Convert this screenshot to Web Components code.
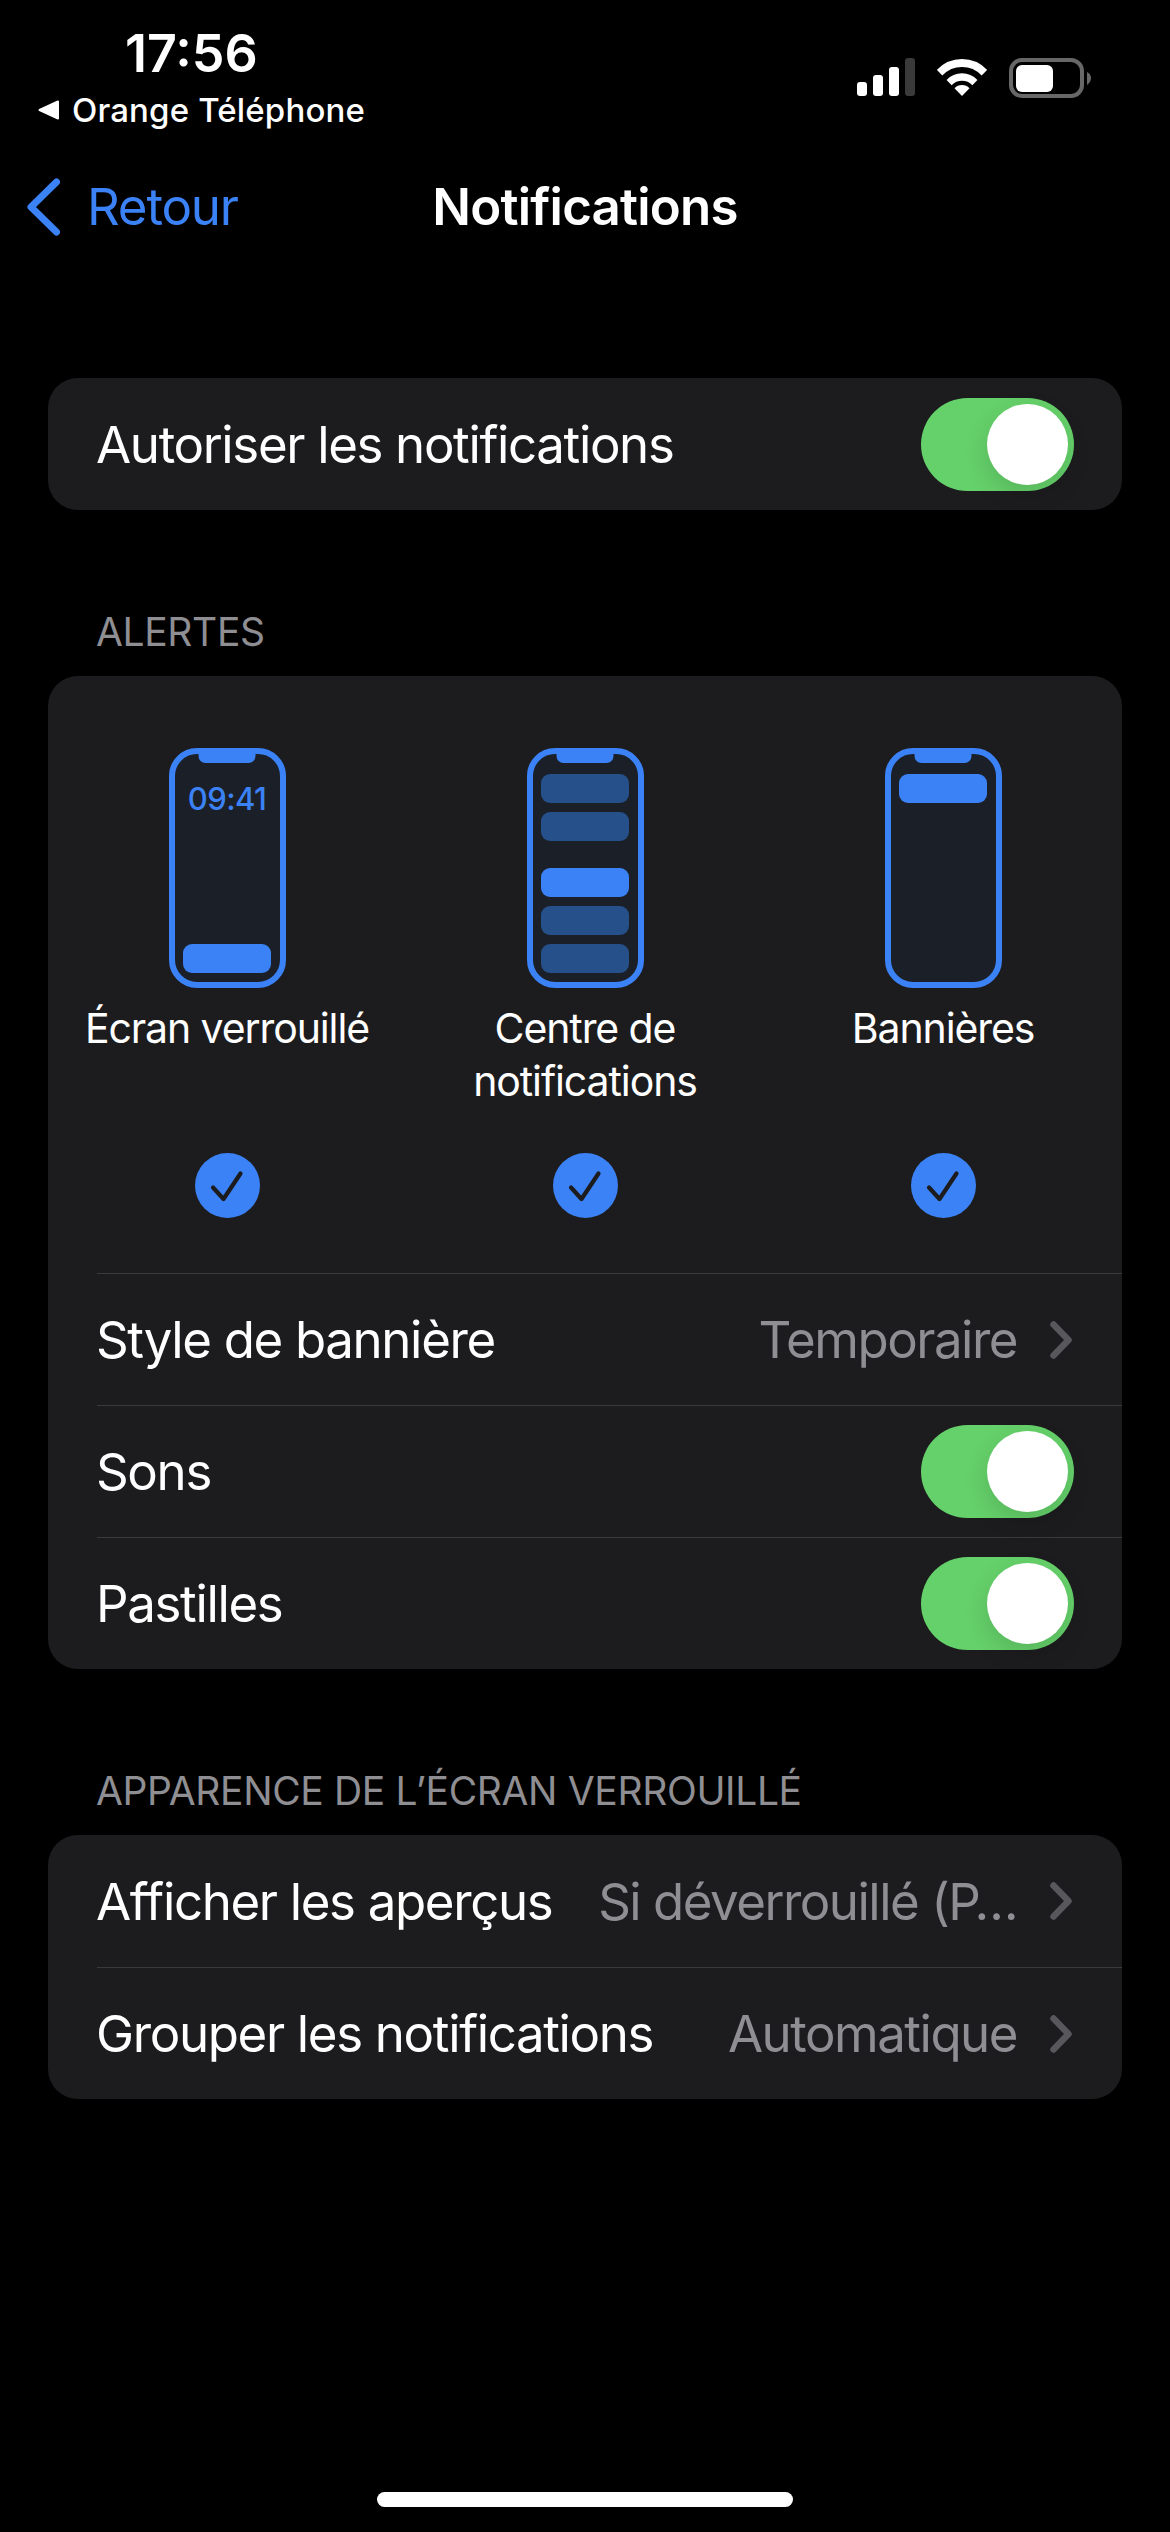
<!DOCTYPE html>
<html lang="fr">
<head>
<meta charset="utf-8">
<title>Notifications</title>
<style>
  html, body { margin: 0; background: #000; }
  body {
    width: 1170px;
    height: 2532px;
    overflow: hidden;
    color: #fff;
    font-family: Inter, "Liberation Sans", sans-serif;
    display: flex;
    flex-direction: column;
  }
</style>
</head>
<body>
  <status-bar time="17:56" carrier="Orange Téléphone"></status-bar>
  <nav-bar back="Retour" heading="Notifications"></nav-bar>

  <settings-group style="margin-top: 107px">
    <settings-row label="Autoriser les notifications"><toggle-switch></toggle-switch></settings-row>
  </settings-group>

  <settings-group heading="ALERTES" style="margin-top: 100px">
    <alert-styles>
      <alert-option label="Écran verrouillé">
        <phone-mock>
          <lock-time>09:41</lock-time>
          <notif-pill style="margin-top: auto"></notif-pill>
        </phone-mock>
      </alert-option>
      <alert-option label="Centre de notifications">
        <phone-mock>
          <notif-pill dim></notif-pill>
          <notif-pill dim style="margin-top: 9px"></notif-pill>
          <notif-pill style="margin-top: 27px"></notif-pill>
          <notif-pill dim style="margin-top: 9px"></notif-pill>
          <notif-pill dim style="margin-top: 9px"></notif-pill>
        </phone-mock>
      </alert-option>
      <alert-option label="Bannières">
        <phone-mock>
          <notif-pill></notif-pill>
        </phone-mock>
      </alert-option>
    </alert-styles>
    <settings-row separator label="Style de bannière" value="Temporaire" chevron></settings-row>
    <settings-row separator label="Sons"><toggle-switch></toggle-switch></settings-row>
    <settings-row separator label="Pastilles"><toggle-switch></toggle-switch></settings-row>
  </settings-group>

  <settings-group heading="APPARENCE DE L’ÉCRAN VERROUILLÉ" style="margin-top: 100px">
    <settings-row label="Afficher les aperçus" value="Si déverrouillé (P…" chevron></settings-row>
    <settings-row separator label="Grouper les notifications" value="Automatique" chevron></settings-row>
  </settings-group>

  <home-bar></home-bar>

<script>
// Small helper: every element below just sets its shadow markup once
class ShadowEl extends HTMLElement {
  constructor() {
    super();
    this.attachShadow({ mode: 'open' });
  }
  connectedCallback() {
    this.shadowRoot.innerHTML = this.render();
  }
  attr(name) {
    return this.getAttribute(name) || '';
  }
}

class StatusBar extends ShadowEl {
  render() {
    return `
    <style>
      :host { display: flex; height: 132px; flex: none; justify-content: space-between; }
      .left { width: 400px; display: flex; flex-direction: column; }
      .time { font-size: 52px; font-weight: 600; line-height: 50px; margin-top: 29px; padding-left: 125px; }
      .carrier { display: flex; align-items: center; gap: 13px; margin-top: 9px; padding-left: 38px; font-size: 33px; font-weight: 500; line-height: 44px; letter-spacing: 0.15px; white-space: nowrap; }
      .right { display: flex; align-items: flex-start; padding: 58px 79px 0 0; }
      .signal, .wifi { margin-right: 22px; }
      svg { display: block; }
    </style>
    <div class="left">
      <div class="time">${this.attr('time')}</div>
      <div class="carrier">
        <svg width="21" height="20" viewBox="0 0 21 20"><path d="M20 1.5 V18.5 L1.5 10 Z" fill="#fff" stroke="#fff" stroke-width="2" stroke-linejoin="round"/></svg>
        <span>${this.attr('carrier')}</span>
      </div>
    </div>
    <div class="right">
      <svg class="signal" width="58" height="38" viewBox="0 0 58 38">
        <rect x="0" y="24" width="10" height="14" rx="3" fill="#fff"/>
        <rect x="16" y="17" width="10" height="21" rx="3" fill="#fff"/>
        <rect x="32" y="9" width="10" height="29" rx="3" fill="#fff"/>
        <rect x="48" y="0" width="10" height="38" rx="3" fill="#3a3a3a"/>
      </svg>
      <svg class="wifi" width="50" height="38" viewBox="-26 -38 52 38" preserveAspectRatio="none" fill="none" stroke="#fff">
        <path d="M-23.3 -23.3 A33 33 0 0 1 23.3 -23.3" stroke-width="8"/>
        <path d="M-13.4 -13.4 A19 19 0 0 1 13.4 -13.4" stroke-width="7.5"/>
        <path d="M0 0 L-7.8 -7.8 A11 11 0 0 1 7.8 -7.8 Z" fill="#fff" stroke="none"/>
      </svg>
      <svg width="82" height="40" viewBox="0 0 82 40">
        <rect x="2" y="2" width="71" height="36" rx="11" fill="none" stroke="#676767" stroke-width="4"/>
        <rect x="7" y="7" width="37" height="27" rx="6" fill="#fff"/>
        <path d="M78 14 Q82 16 82 20 Q82 24 78 27 Z" fill="#676767"/>
      </svg>
    </div>`;
  }
}

class NavBar extends ShadowEl {
  render() {
    return `
    <style>
      :host { display: grid; grid-template-columns: 1fr auto 1fr; align-items: center; height: 139px; padding-top: 10px; box-sizing: border-box; flex: none; font-size: 51px; letter-spacing: -1.2px; }
      .back { display: flex; align-items: center; gap: 27px; padding-left: 27px; color: #3b82f6; }
      h1 { margin: 0; font-size: 51px; font-weight: 600; color: #fff; letter-spacing: -0.8px; }
      svg { display: block; }
    </style>
    <div class="back">
      <svg width="33" height="58" viewBox="0 0 33 58"><path d="M29.5 4 L4 29 L29.5 54" fill="none" stroke="#3b82f6" stroke-width="7" stroke-linecap="round" stroke-linejoin="round"/></svg>
      <span>${this.attr('back')}</span>
    </div>
    <h1>${this.attr('heading')}</h1>
    <div></div>`;
  }
}

class SettingsGroup extends ShadowEl {
  render() {
    const heading = this.attr('heading');
    return `
    <style>
      :host { display: block; flex: none; }
      .heading { font-size: 39px; line-height: 44px; letter-spacing: -0.35px; color: #8e8e93; padding: 0 0 22px 96px; }
      .card { margin: 0 48px; background: #1c1c1e; border-radius: 30px; overflow: hidden; }
    </style>
    ${heading ? `<div class="heading">${heading}</div>` : ''}
    <div class="card"><slot></slot></div>`;
  }
}

class SettingsRow extends ShadowEl {
  render() {
    const value = this.attr('value');
    const chevron = this.hasAttribute('chevron');
    return `
    <style>
      :host { display: block; padding-left: 49px; font-size: 51px; letter-spacing: -1.35px; }
      .row { display: flex; align-items: center; height: 132px; box-sizing: border-box; white-space: nowrap; }
      :host([separator]) .row { border-top: 1px solid #3a3a3c; }
      .label { flex: none; margin-left: -1px; }
      .value { flex: none; margin-left: auto; letter-spacing: -1.5px; color: #8e8e93; }
      .end { margin-left: auto; padding-right: 48px; display: flex; }
      svg { flex: none; display: block; margin: 0 50px 0 33px; }
    </style>
    <div class="row">
      <span class="label">${this.attr('label')}</span>
      ${value ? `<span class="value">${value}</span>` : ''}
      ${chevron ? `<svg width="22" height="38" viewBox="0 0 22 38"><path d="M3.5 3.5 L18.5 19 L3.5 34.5" fill="none" stroke="#58585c" stroke-width="6.5" stroke-linecap="round" stroke-linejoin="round"/></svg>`
                : `<div class="end"><slot></slot></div>`}
    </div>`;
  }
}

class ToggleSwitch extends ShadowEl {
  render() {
    return `
    <style>
      :host { display: flex; justify-content: flex-end; align-items: center; width: 153px; height: 93px; box-sizing: border-box; padding-right: 6px; background: #65d16a; border-radius: 47px; }
      .knob { width: 81px; height: 81px; border-radius: 50%; background: #fff; box-shadow: 0 9px 24px rgba(0, 0, 0, 0.14); }
    </style>
    <div class="knob"></div>`;
  }
}

class AlertStyles extends ShadowEl {
  render() {
    return `
    <style>
      :host { display: grid; grid-template-columns: repeat(3, 1fr); padding: 72px 0 55px; }
    </style>
    <slot></slot>`;
  }
}

class AlertOption extends ShadowEl {
  render() {
    return `
    <style>
      :host { display: flex; flex-direction: column; align-items: center; }
      .label { height: 105px; margin-top: 14px; font-size: 41px; letter-spacing: -1.1px; line-height: 53px; text-align: center; width: 300px; }
      svg { display: block; margin-top: 46px; }
    </style>
    <slot></slot>
    <div class="label">${this.attr('label')}</div>
    <svg width="65" height="65" viewBox="0 0 65 65">
      <circle cx="32.5" cy="32.5" r="32.5" fill="#3b82f6"/>
      <path d="M18 34.5 L28.5 46 L45.5 20.5" fill="none" stroke="#1c1c1e" stroke-width="4.2" stroke-linecap="round" stroke-linejoin="round"/>
    </svg>`;
  }
}

class PhoneMock extends ShadowEl {
  render() {
    return `
    <style>
      :host { position: relative; display: flex; flex-direction: column; width: 117px; height: 240px; box-sizing: border-box; border: 6px solid #3b82f6; border-radius: 28px; background: #1b2028; padding: 20px 8.5px 9px; }
      .notch { position: absolute; top: -1px; left: 50%; width: 57px; height: 10px; transform: translateX(-50%); background: #3b82f6; border-radius: 0 0 7px 7px; }
    </style>
    <div class="notch"></div>
    <slot></slot>`;
  }
}

class NotifPill extends ShadowEl {
  render() {
    return `
    <style>
      :host { display: block; flex: none; height: 29px; border-radius: 9px; background: #3b82f6; }
      :host([dim]) { background: #25508a; }
    </style>`;
  }
}

class LockTime extends ShadowEl {
  render() {
    return `
    <style>
      :host { display: block; flex: none; margin-top: 8px; text-align: center; color: #3b82f6; font-size: 31px; font-weight: 500; letter-spacing: -0.6px; line-height: 34px; }
    </style>
    <slot></slot>`;
  }
}

class HomeBar extends ShadowEl {
  render() {
    return `
    <style>
      :host { display: flex; justify-content: center; margin-top: auto; padding-bottom: 25px; }
      div { width: 416px; height: 15px; border-radius: 8px; background: #fff; }
    </style>
    <div></div>`;
  }
}

customElements.define('status-bar', StatusBar);
customElements.define('nav-bar', NavBar);
customElements.define('settings-group', SettingsGroup);
customElements.define('settings-row', SettingsRow);
customElements.define('toggle-switch', ToggleSwitch);
customElements.define('alert-styles', AlertStyles);
customElements.define('alert-option', AlertOption);
customElements.define('phone-mock', PhoneMock);
customElements.define('notif-pill', NotifPill);
customElements.define('lock-time', LockTime);
customElements.define('home-bar', HomeBar);
</script>
</body>
</html>
